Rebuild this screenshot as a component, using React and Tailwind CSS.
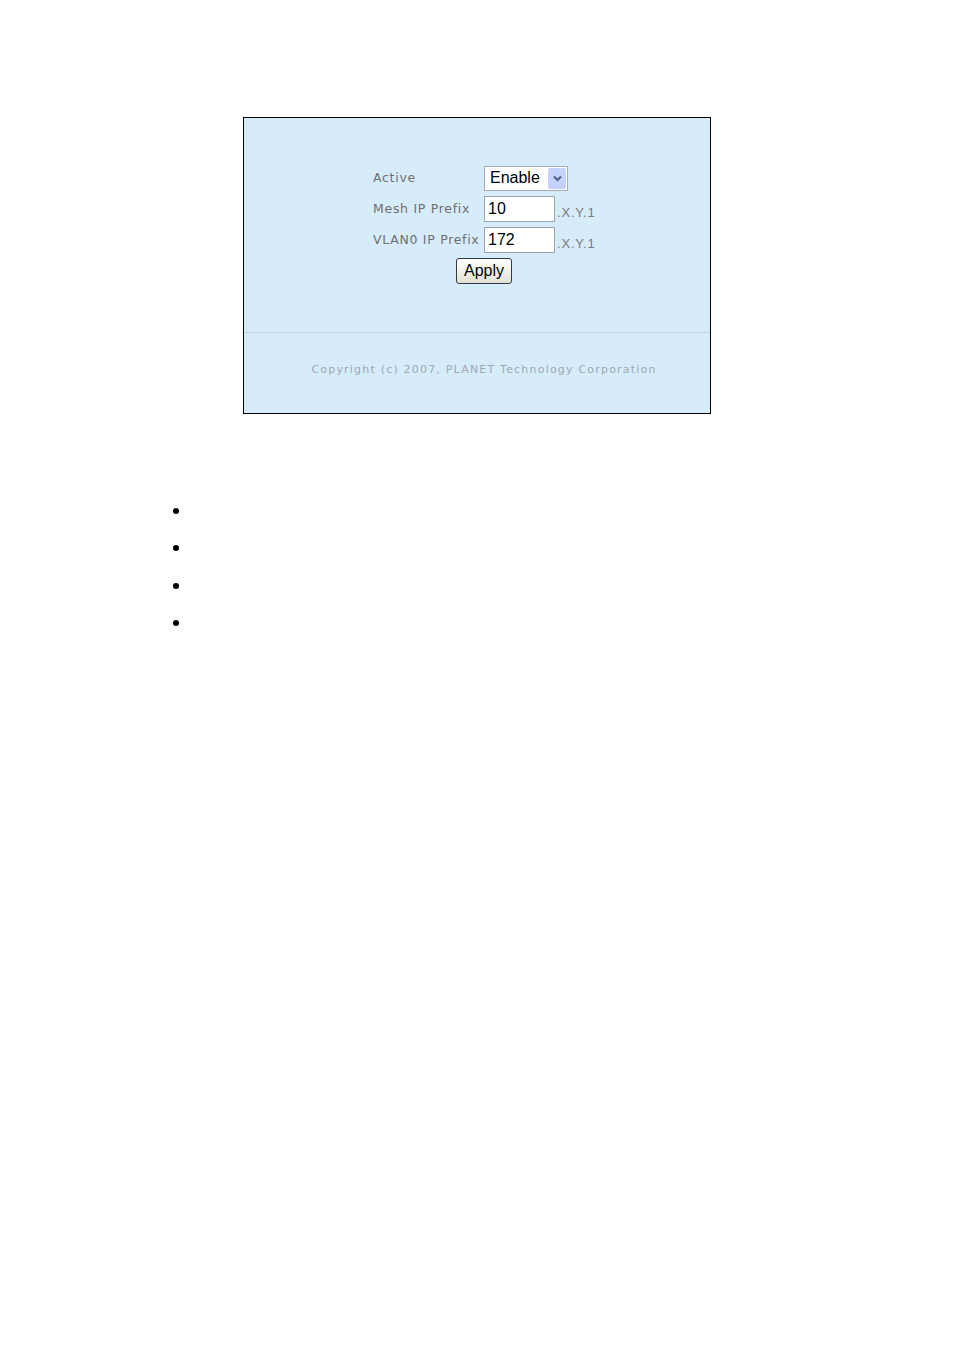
import React from 'react';

const labelFont = { fontFamily: '"DejaVu Sans", Verdana, sans-serif' };

function Field({ label, children, suffix }) {
  return (
    <div className="flex items-center h-[26px]">
      <span className="w-[111px] text-[12.5px] text-[#6f6f6f] tracking-[0.7px] whitespace-nowrap" style={labelFont}>
        {label}
      </span>
      {children}
      {suffix && (
        <span className="ml-[2px] mt-[7px] text-[13px] tracking-[0.8px] text-[#7a7a7a]" style={{ fontFamily: '"Liberation Sans", Arial, sans-serif' }}>
          {suffix}
        </span>
      )}
    </div>
  );
}

function App() {
  return (
    <div className="w-[954px] h-[1350px] bg-white" style={{ fontFamily: '"Liberation Sans", Arial, sans-serif' }}>
      <div className="pt-[117px] pl-[243px]">
        <div className="w-[468px] h-[297px] border border-black bg-[#d7ecfb] flex flex-col">
          <div className="h-[214px] pt-[47px] pl-[129px] flex flex-col gap-[5px]">
            <Field label="Active">
              <div className="w-[84px] h-[25px] border border-[#a5acb2] bg-white flex items-center pl-[5px] pr-[1px]">
                <span className="flex-1 text-[16px] text-black">Enable</span>
                <span className="w-[18px] h-[21px] bg-[#c3d3fd] rounded-[2px] flex items-center justify-center">
                  <svg width="9" height="7" viewBox="0 0 9 7">
                    <path d="M1 1.5 L4.5 5 L8 1.5" fill="none" stroke="#4d6185" strokeWidth="2" />
                  </svg>
                </span>
              </div>
            </Field>
            <Field label="Mesh IP Prefix" suffix=".X.Y.1">
              <div className="w-[71px] h-[26px] border border-[#9aa5ae] bg-white flex items-center pl-[3px] text-[16px] text-black">
                10
              </div>
            </Field>
            <Field label="VLAN0 IP Prefix" suffix=".X.Y.1">
              <div className="w-[71px] h-[26px] border border-[#9aa5ae] bg-white flex items-center pl-[3px] text-[16px] text-black">
                172
              </div>
            </Field>
            <div className="pl-[83px]">
              <button className="w-[56px] h-[26px] rounded-[3px] border border-[#2f3a45] bg-gradient-to-b from-white to-[#e4e2d6] text-[16px] text-black flex items-center justify-center">
                Apply
              </button>
            </div>
          </div>
          <div className="h-px bg-[#c0d3e0]" />
          <div className="flex-1 flex justify-center pl-[14px] pt-[29px]">
            <span className="text-[11px] text-[#a0a8ae] tracking-[1.2px]" style={labelFont}>
              Copyright (c) 2007, PLANET Technology Corporation
            </span>
          </div>
        </div>
      </div>
      <ul className="mt-[94px] pl-[173px] flex flex-col gap-[32.5px]">
        {[0, 1, 2, 3].map((i) => (
          <li key={i} className="h-[5px] flex items-center">
            <span className="w-[6px] h-[6px] rounded-full bg-black" />
          </li>
        ))}
      </ul>
    </div>
  );
}

export default App;
